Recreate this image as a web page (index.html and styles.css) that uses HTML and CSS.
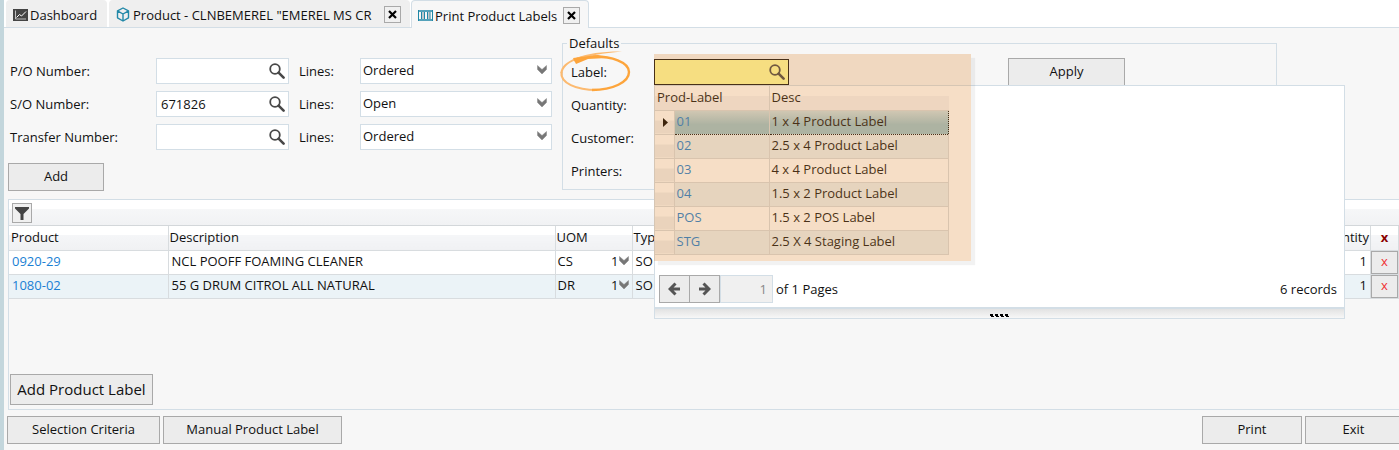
FILE: index.html
```html
<!DOCTYPE html>
<html lang="en">

<head>
  <meta charset="UTF-8">
  <meta name="viewport" content="width=device-width, initial-scale=1.0">
  <title>Print Product Labels</title>
  <link rel="stylesheet" href="styles.css">
</head>

<body>
  <svg class="sprite" aria-hidden="true">
    <symbol id="search" viewBox="0 0 16 16">
      <circle cx="6" cy="6" r="4.8" fill="none" stroke="#484848" stroke-width="1.8" />
      <path d="M9.6 9.6l5 5" stroke="#484848" stroke-width="2.6" stroke-linecap="round" />
    </symbol>
    <symbol id="chevron" viewBox="0 0 10 10">
      <path d="M0.500 0.500L5 4.500l4.500-4v4L5 9 0.500 4.500z" fill="#777" stroke="#888" stroke-width="0.500" />
    </symbol>
    <symbol id="close" viewBox="0 0 9 9">
      <path d="M1 1l7 7M8 1L1 8" stroke="#000" stroke-width="2.2" />
    </symbol>
  </svg>

  <nav class="tabs">
    <div class="tab tab-home">
      <svg width="15" height="12" viewBox="0 0 15 12">
        <rect width="15" height="12" fill="#444" />
        <path d="M2.5 1.5v8.5h10.5" fill="none" stroke="#ddd" stroke-width="0.8" />
        <path d="M3.5 8.5l3-3 2 1.5 4.5-4.5" fill="none" stroke="#fff" />
      </svg>
      <span>Dashboard</span>
    </div>
    <div class="tab tab-product">
      <svg width="14" height="15" viewBox="0 0 14 15">
        <path d="M7 1l5.5 2.8v7L7 14l-5.500-3.200v-7zM1.500 3.800L7 7l5.500-3.200M7 7v7" fill="none" stroke="#2288a8" stroke-width="1.400" stroke-linejoin="round" />
      </svg>
      <span>Product - CLNBEMEREL "EMEREL MS CR</span>
      <button type="button" class="tab-close" aria-label="Close"><svg width="9" height="9"><use href="#close" /></svg></button>
    </div>
    <div class="tab tab-active">
      <svg width="15" height="11" viewBox="0 0 15 11">
        <path d="M0 1h15M0 10h15" stroke="#1f87a6" stroke-width="1.500" />
        <path d="M0.500 0v11M3.500 2v7M6.500 2v7M9.500 2v7M12 2v7M14.500 0v11" stroke="#1f87a6" />
        <path d="M5 2v7M11 2v7" stroke="#8a9aa0" />
      </svg>
      <span>Print Product Labels</span>
      <button type="button" class="tab-close" aria-label="Close"><svg width="9" height="9"><use href="#close" /></svg></button>
    </div>
  </nav>

  <main>
    <div class="criteria">
      <form class="numbers">
        <label for="po">P/O Number:</label>
        <div class="lookup">
          <input type="text" id="po">
          <button type="button" aria-label="Search"><svg width="16" height="16"><use href="#search" /></svg></button>
        </div>
        <label for="poLines">Lines:</label>
        <div class="dropdown">
          <select id="poLines"><option>Ordered</option><option>Open</option></select>
          <svg width="10" height="10"><use href="#chevron" /></svg>
        </div>

        <label for="so">S/O Number:</label>
        <div class="lookup">
          <input type="text" id="so" value="671826">
          <button type="button" aria-label="Search"><svg width="16" height="16"><use href="#search" /></svg></button>
        </div>
        <label for="soLines">Lines:</label>
        <div class="dropdown">
          <select id="soLines"><option>Open</option><option>Ordered</option></select>
          <svg width="10" height="10"><use href="#chevron" /></svg>
        </div>

        <label for="transfer">Transfer Number:</label>
        <div class="lookup">
          <input type="text" id="transfer">
          <button type="button" aria-label="Search"><svg width="16" height="16"><use href="#search" /></svg></button>
        </div>
        <label for="transferLines">Lines:</label>
        <div class="dropdown">
          <select id="transferLines"><option>Ordered</option><option>Open</option></select>
          <svg width="10" height="10"><use href="#chevron" /></svg>
        </div>

        <button type="button" class="btn btn-add">Add</button>
      </form>

      <fieldset class="defaults">
        <legend>Defaults</legend>
        <div class="defaults-row">
          <label for="label">Label:</label>
          <svg class="marker" width="74" height="44" viewBox="0 0 74 44">
            <path d="M2.500 22C1 33 17 40 38 40" fill="none" stroke="#fcba70" stroke-width="2.200" />
            <path d="M33 40C54 40 70 32 70 22 70 12 52 6 34 6.500c-8 0-14 1.500-19 4" fill="none" stroke="#fda53c" stroke-width="2.400" />
            <path d="M1.500 23C2 10 27 1 63 1.500 44 3 29 6 17 10c-8 3-13 8-13.500 13z" fill="#fcba70" />
            <path d="M14 8l25-3 9 3-19 1-12 5z" fill="#fda53c" />
          </svg>
          <div class="picker">
            <div class="lookup lookup-current">
              <input type="text" id="label">
              <button type="button" aria-label="Search"><svg width="16" height="16"><use href="#search" /></svg></button>
            </div>

            <div class="popup">
              <table class="choices">
                <colgroup><col class="c-mark"><col class="c-code"><col></colgroup>
                <thead>
                  <tr><th colspan="2">Prod-Label</th><th>Desc</th></tr>
                </thead>
                <tbody>
                  <tr class="selected"><td><svg width="5" height="9" viewBox="0 0 5 9"><path d="M0 0l5 4.500-5 4.500z" /></svg></td><td><a href="#">01</a></td><td>1 x 4 Product Label</td></tr>
                  <tr><td></td><td><a href="#">02</a></td><td>2.5 x 4 Product Label</td></tr>
                  <tr><td></td><td><a href="#">03</a></td><td>4 x 4 Product Label</td></tr>
                  <tr><td></td><td><a href="#">04</a></td><td>1.5 x 2 Product Label</td></tr>
                  <tr><td></td><td><a href="#">POS</a></td><td>1.5 x 2 POS Label</td></tr>
                  <tr><td></td><td><a href="#">STG</a></td><td>2.5 X 4 Staging Label</td></tr>
                </tbody>
              </table>
              <div class="pager">
                <button type="button" class="btn" aria-label="Previous page"><svg width="13" height="14" viewBox="0 0 13 14"><path d="M12 7H2M7.500 1.500L2 7l5.500 5.500" /></svg></button>
                <button type="button" class="btn" aria-label="Next page"><svg width="13" height="14" viewBox="0 0 13 14"><path d="M1 7h10M5.500 1.500L11 7l-5.500 5.500" /></svg></button>
                <input type="text" id="page" value="1" disabled>
                <label for="page">of 1 Pages</label>
                <span class="records">6 records</span>
              </div>
              <div class="grip">
                <svg width="19" height="4" viewBox="0 0 19 4"><path d="M0 0h3v2H0zM5 0h3v2H5zM10 0h3v2h-3zM15 0h3v2h-3zM1 2h3v1H1zM6 2h3v1H6zM11 2h3v1h-3zM16 2h3v1h-3z" /></svg>
              </div>
            </div>
            <div class="highlight"></div>
          </div>
          <button type="button" class="btn btn-apply">Apply</button>
        </div>
        <div class="defaults-row">Quantity:</div>
        <div class="defaults-row">Customer:</div>
        <div class="defaults-row">Printers:</div>
      </fieldset>
    </div>

    <section class="lines">
      <div class="toolbar">
        <button type="button" class="filter" aria-label="Filter"><svg width="14" height="13" viewBox="0 0 14 13"><path d="M0 0h14v1.500L8.500 7v6h-3V7L0 1.500z" fill="#444" /></svg></button>
      </div>
      <table class="grid">
        <colgroup><col class="c-product"><col class="c-desc"><col class="c-uom"><col><col class="c-qty"><col class="c-del"></colgroup>
        <thead>
          <tr><th>Product</th><th>Description</th><th>UOM</th><th>Type</th><th class="num">Quantity</th><th class="del">x</th></tr>
        </thead>
        <tbody>
          <tr>
            <td><a href="#">0920-29</a></td>
            <td>NCL POOFF FOAMING CLEANER</td>
            <td><div class="uom"><span>CS</span><select aria-label="Units"><option>1</option></select><svg width="10" height="10"><use href="#chevron" /></svg></div></td>
            <td>SO</td>
            <td class="num">1</td>
            <td class="del"><button type="button">x</button></td>
          </tr>
          <tr>
            <td><a href="#">1080-02</a></td>
            <td>55 G DRUM CITROL ALL NATURAL</td>
            <td><div class="uom"><span>DR</span><select aria-label="Units"><option>1</option></select><svg width="10" height="10"><use href="#chevron" /></svg></div></td>
            <td>SO</td>
            <td class="num">1</td>
            <td class="del"><button type="button">x</button></td>
          </tr>
        </tbody>
      </table>
      <button type="button" class="btn btn-large">Add Product Label</button>
    </section>
  </main>

  <footer>
    <button type="button" class="btn btn-criteria">Selection Criteria</button>
    <button type="button" class="btn btn-manual">Manual Product Label</button>
    <button type="button" class="btn btn-print">Print</button>
    <button type="button" class="btn btn-exit">Exit</button>
  </footer>
</body>

</html>
```

FILE: styles.css
```css
* {
  box-sizing: border-box;
}

body {
  display: flex;
  flex-direction: column;
  min-height: 100vh;
  margin: 0;
  border-left: 4px solid #c3d6dc;
  background-color: #f7f7f7;
  color: #111;
  font: 13px/18px "Open Sans", "Noto Sans", sans-serif;
  overflow-x: hidden;
}

button,
input,
select {
  margin: 0;
  padding: 0;
  color: inherit;
  font: inherit;
}

button {
  cursor: pointer;
}

a {
  color: #1a7fd4;
  text-decoration: none;
}

svg {
  display: block;
  flex: none;
}

.sprite {
  position: absolute;
  width: 0;
  height: 0;
}

.btn {
  height: 28px;
  padding-bottom: 2px;
  border: 1px solid #a9a9a9;
  background-color: #ececec;
}

/* tabs */
.tabs {
  display: flex;
  height: 28px;
  padding-left: 2px;
  border-bottom: 1px solid #d3dee6;
  background-color: #fff;
}

.tab {
  display: flex;
  align-items: center;
  height: 27px;
  padding: 2px 9px 0 7px;
  border-radius: 4px 4px 0 0;
  background-color: #efefef;
  white-space: nowrap;
}

.tab-home {
  width: 101px;
  margin-right: 2px;
  gap: 2px;
}

.tab-product {
  width: 301px;
  gap: 3px;
}

.tab-active {
  width: 178px;
  height: 28px;
  margin-left: 1px;
  padding: 2px 8px 0 6px;
  gap: 2px;
  border: 1px solid #d3dee6;
  border-bottom: 0;
  background-color: #f7f7f7;
}

.tab-close {
  display: grid;
  place-items: center;
  width: 17px;
  height: 17px;
  margin-left: auto;
  border: 1px solid #a9a9a9;
  background-color: #f0f0f0;
}

/* search criteria */
main {
  display: flex;
  flex: 1;
  flex-direction: column;
  padding-left: 4px;
}

.criteria {
  display: flex;
  align-items: flex-start;
  gap: 10px;
  height: 171px;
}

.numbers {
  display: grid;
  grid-template-columns: 146px 133px 71px 192px;
  grid-auto-rows: 26px;
  row-gap: 7px;
  align-items: center;
  padding: 30px 0 0 2px;
}

.numbers label:nth-of-type(even) {
  padding-left: 10px;
}

.lookup {
  display: flex;
  align-items: center;
  height: 26px;
  border: 1px solid #d3dee6;
  background-color: #fff;
}

.lookup input {
  flex: 1;
  min-width: 0;
  height: 100%;
  padding-left: 4px;
  border: 0;
  outline: 0;
  background: none;
}

.lookup button {
  padding: 0 3px;
  border: 0;
  background: none;
}

.dropdown {
  position: relative;
  height: 26px;
}

.dropdown select {
  width: 100%;
  height: 100%;
  padding: 0 0 2px 2px;
  border: 1px solid #d3dee6;
  border-radius: 0;
  background-color: #fff;
  appearance: none;
}

.dropdown svg {
  position: absolute;
  top: 7px;
  right: 5px;
  pointer-events: none;
}

.btn-add {
  grid-column: 1;
  align-self: start;
  width: 96px;
  margin: 6px 0 0 -2px;
}

/* defaults */
.defaults {
  flex: 0 1 715px;
  min-width: 0;
  height: 156px;
  margin: 6px 0 0;
  padding: 7px 8px 0;
  border: 1px solid #d3dee6;
}

.defaults legend {
  margin-left: -4px;
  padding: 0 2px;
}

.defaults-row {
  display: flex;
  align-items: center;
  position: relative;
  height: 26px;
  margin-bottom: 7px;
}

.defaults-row > label {
  width: 83px;
}

.marker {
  position: absolute;
  top: -9px;
  left: -12px;
}

.picker {
  position: relative;
  width: 135px;
}

.lookup-current {
  border-color: #111;
  background-color: #ffffa1;
}

.btn-apply {
  width: 117px;
  margin-left: 219px;
}

.popup {
  position: absolute;
  z-index: 1;
  top: 26px;
  left: 0;
  width: 691px;
  border: 1px solid #d3dee6;
  background-color: #fff;
}

.choices {
  width: 294px;
  border-collapse: collapse;
  table-layout: fixed;
}

.c-mark {
  width: 19px;
}

.c-code {
  width: 95px;
}

.choices th,
.choices td {
  height: 24px;
  padding: 0 2px 2px;
  border: 1px solid #d8dcdf;
  border-top: 0;
  font-weight: normal;
  text-align: left;
}

.choices th {
  background: linear-gradient(#fff 40%, #f4f5f7 40%);
}

.choices th:first-child {
  border-left: 0;
}

.choices th:last-child {
  border-right: 0;
}

.choices td:first-child {
  padding: 0 0 0 8px;
  border-left: 0;
  background: linear-gradient(#fff 45%, #eff0f2 45%);
}

.choices tbody tr:nth-child(even) {
  background-color: #e9f1f4;
}

.choices .selected {
  background: linear-gradient(#cfe2e6, #9cc4ce 60%);
}

.choices .selected td:not(:first-child) {
  border-top: 1px dotted #111;
  border-bottom: 1px dotted #111;
}

.choices .selected td:nth-child(2) {
  border-left: 1px dotted #111;
}

.choices .selected td:last-child {
  border-right: 1px dotted #111;
}

.pager {
  display: flex;
  align-items: center;
  padding: 20px 7px 4px 4px;
}

.pager .btn {
  display: grid;
  place-items: center;
  width: 31px;
  padding: 0;
}

.pager .btn + .btn {
  margin-left: -1px;
}

.pager path {
  fill: none;
  stroke: #555;
  stroke-width: 3;
}

.pager input {
  width: 53px;
  height: 28px;
  padding-right: 5px;
  border: 1px solid #d3dee6;
  background-color: #f0f0f0;
  color: #888;
  text-align: right;
}

.pager label {
  padding-left: 3px;
}

.records {
  margin-left: auto;
}

.grip {
  display: flex;
  justify-content: center;
  align-items: flex-end;
  height: 11px;
  border-top: 2px solid #d3dee6;
  background: linear-gradient(#e2e2e2, #f7f7f7);
}

.highlight {
  position: absolute;
  z-index: 2;
  top: -5px;
  left: 0;
  width: 317px;
  height: 207px;
  background-color: rgba(222, 133, 44, 0.27);
  box-shadow: 4px 4px 1px rgba(0, 0, 0, 0.05);
  pointer-events: none;
}

/* product lines */
.lines {
  display: flex;
  flex: 1;
  flex-direction: column;
  border: 1px solid #d3dee6;
  border-right: 0;
}

.toolbar {
  height: 26px;
  padding: 3px;
  border-bottom: 1px solid #d3d7da;
  background: linear-gradient(#fff 36%, #f6f7f8 36%, #f1f2f4);
}

.filter {
  display: grid;
  place-items: center;
  width: 20px;
  height: 20px;
  border: 1px solid #a9a9a9;
  background-color: #f0f0f0;
}

.grid {
  width: 100%;
  border-collapse: collapse;
  table-layout: fixed;
}

.c-product {
  width: 159px;
}

.c-desc {
  width: 387px;
}

.c-uom {
  width: 77px;
}

.c-qty {
  width: 100px;
}

.c-del {
  width: 28px;
}

.grid th,
.grid td {
  height: 24px;
  padding: 0 3px 2px;
  border-right: 1px solid #d8dcdf;
  border-bottom: 1px solid #d8dcdf;
  text-align: left;
}

.grid th {
  padding: 0 1px 2px;
  background: linear-gradient(#fff 38%, #f5f6f8 38%, #f0f1f3);
  font-weight: normal;
}

.grid th:first-child {
  padding-left: 2px;
}

.grid td:nth-child(3) {
  padding: 0 3px 2px 2px;
}

.grid tbody tr {
  background-color: #fff;
}

.grid tbody tr:nth-child(even) {
  background-color: #ebf3f7;
}

.grid .num {
  text-align: right;
}

.grid th.del {
  color: #8b0000;
  font-weight: bold;
  text-align: center;
}

.grid td.del {
  padding: 0;
}

.del button {
  display: block;
  width: 100%;
  height: 23px;
  padding-bottom: 2px;
  border: 1px solid #a9a9a9;
  background-color: #ececec;
  color: #f03030;
}

.uom {
  display: flex;
  align-items: center;
}

.uom select {
  width: 16px;
  margin-left: auto;
  border: 0;
  background: none;
  text-align: right;
  text-align-last: right;
  appearance: none;
}

.btn-large {
  width: 143px;
  height: 31px;
  margin: auto 0 4px 1px;
  font-size: 15px;
}

/* bottom buttons */
footer {
  display: flex;
  gap: 3px;
  padding: 6px 0 6px 3px;
}

.btn-criteria {
  width: 153px;
}

.btn-manual {
  width: 179px;
}

.btn-print {
  width: 100px;
  margin-left: auto;
}

.btn-exit {
  width: 97px;
  margin-right: -3px;
}
```
